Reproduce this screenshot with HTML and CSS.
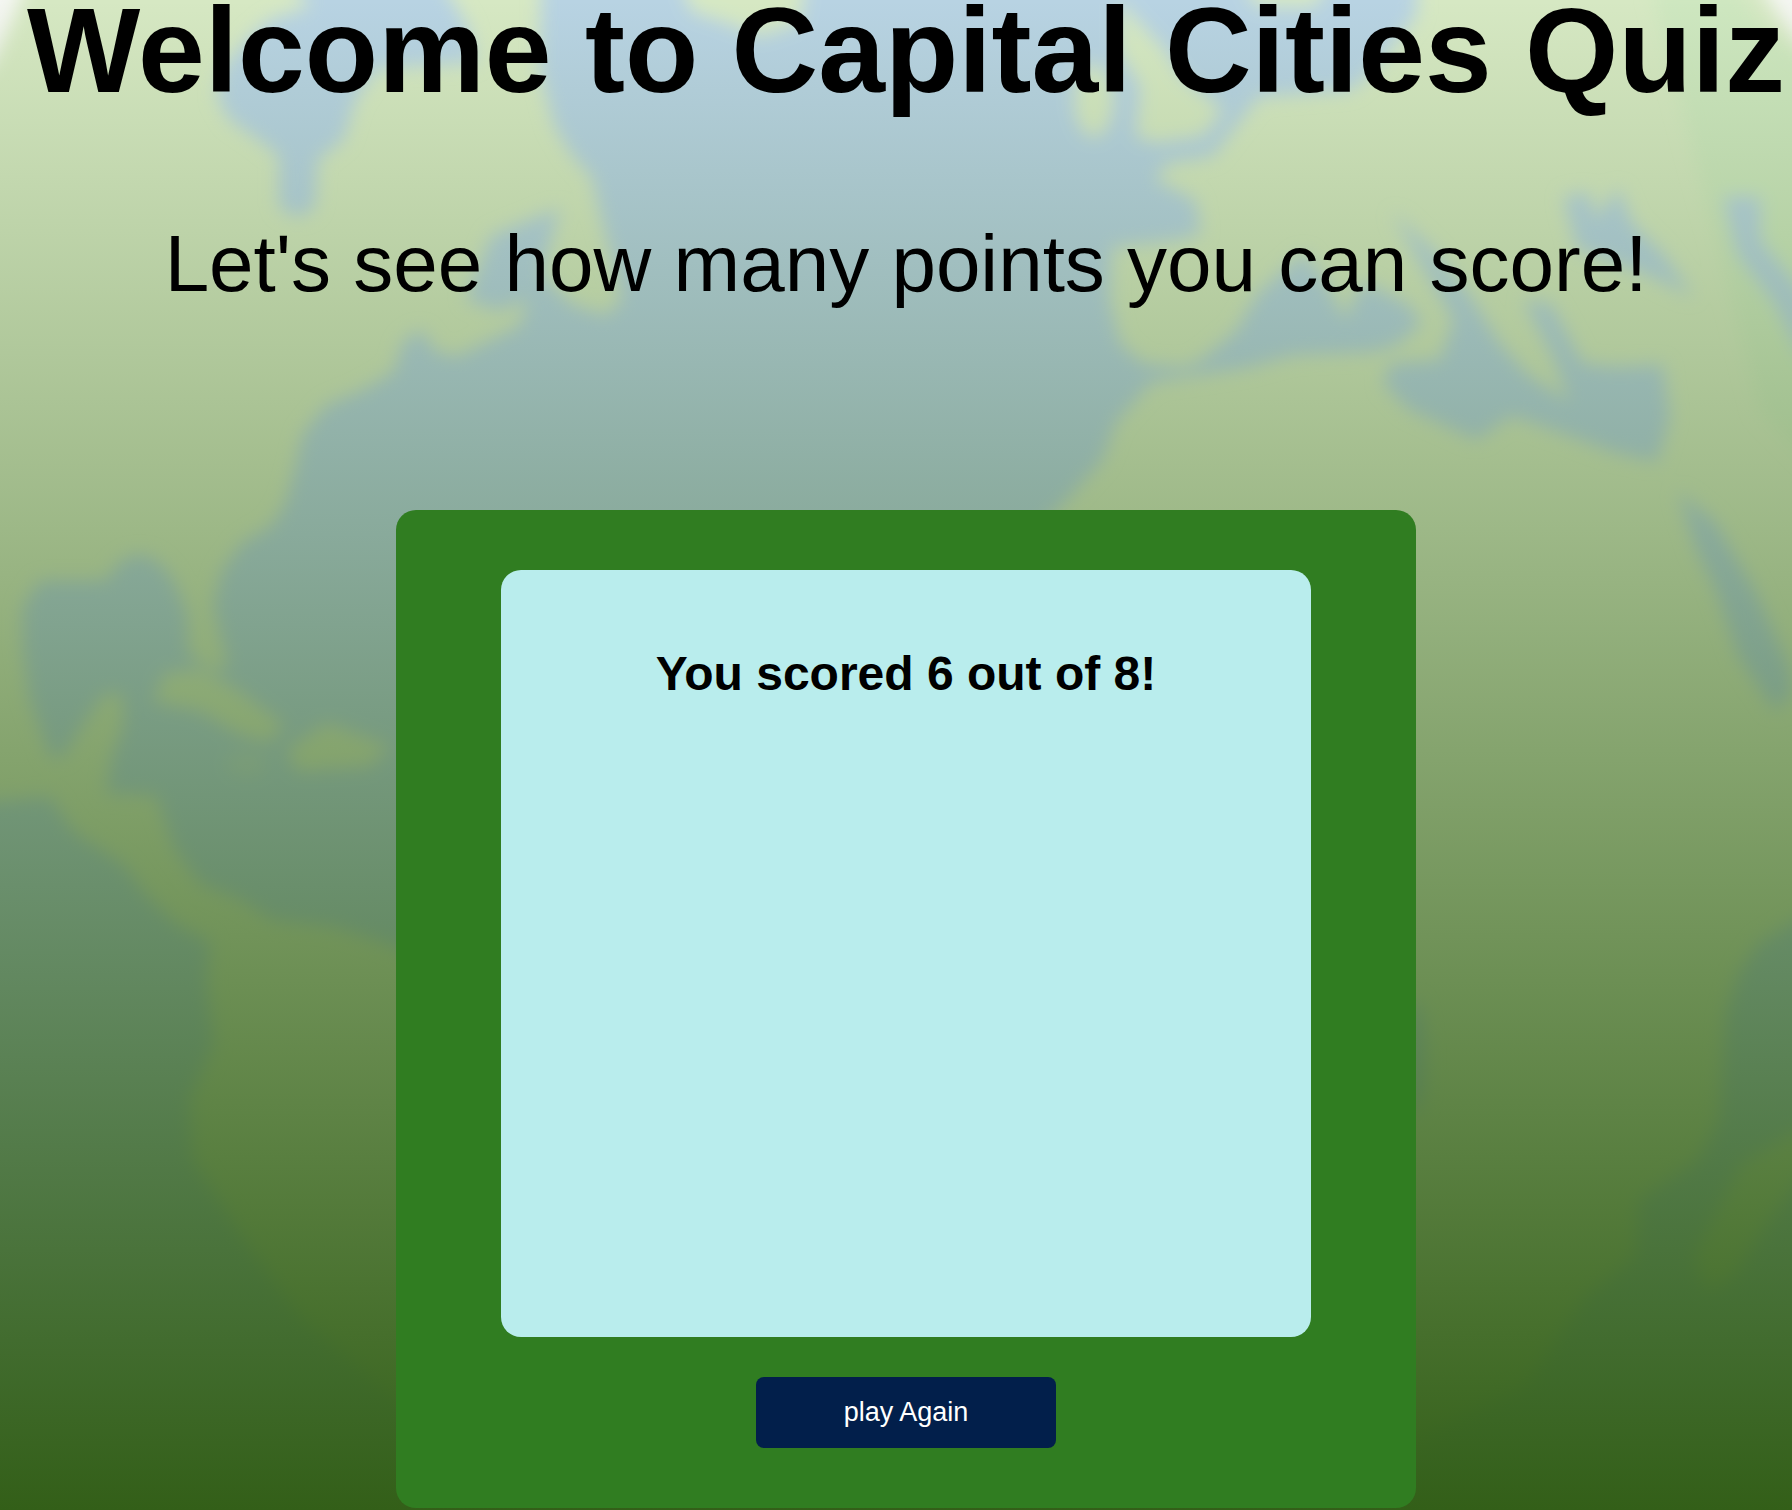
FILE: index.html
```html
<!DOCTYPE html>
<html lang="en">
<head>
  <meta charset="utf-8">
  <meta name="viewport" content="width=device-width, initial-scale=1">
  <title>Capital Cities Quiz</title>
  <link rel="stylesheet" href="styles.css">
</head>
<body>
  <svg class="backdrop" viewBox="0 0 1568 1321" preserveAspectRatio="xMidYMin slice" aria-hidden="true">
    <defs>
      <filter id="soften" x="-2%" y="-2%" width="104%" height="104%">
        <feGaussianBlur stdDeviation="8"/>
      </filter>
      <linearGradient id="shade" x1="0" y1="0" x2="0" y2="1">
        <stop class="shade-top" offset="0"/>
        <stop class="shade-bottom" offset="1"/>
      </linearGradient>
    </defs>
    <rect class="land" width="1568" height="1321"/>
    <g filter="url(#soften)">
      <path class="space" d="M-30 -30H28Q12 20 -10 62H-30ZM1532 -30H1600V60Q1560 30 1532 -30Z"/>
      <path class="far-land" d="M1445 -10Q1475 110 1500 200L1540 360L1600 420V60Q1545 40 1520 -10Z"/>
      <!-- Hudson Bay -->
      <path class="sea" d="M250 -20L272 5L235 18L216 35L195 60L190 85L201 105L226 122L244 136L244 180Q261 198 276 180L278 140L301 122L311 88L330 60L417 55L410 24L384 -20Z"/>
      <!-- Atlantic, Gulf of Mexico and Caribbean -->
      <path class="sea" d="M474 -20L472 60L485 110L500 135L518 155L526 190L534 220L544 262L530 276L500 266L474 240L490 182L430 206L408 262L436 272L462 262L455 285L430 297L400 312L382 308L368 288L352 300L345 325L320 340L285 355L265 380L258 410L250 440L238 460L212 475L194 500L187 530L193 555L200 582L187 588L165 572L164 537L153 510Q128 470 102 495L93 508L35 508L20 531V566L26 612L44 662H55L75 630L92 606L108 608V636L98 662L93 694L137 696L152 741L175 773L210 787L239 805L292 811L346 828L600 1000H900V470L931 440L965 402L976 370L1006 336L1040 322L1000 318L980 300L971 262L973 216L1031 210L1051 204L1046 175L1011 157L1021 143L1061 137L1081 111L1101 85L1182 79L1205 58L1240 12V-20Z"/>
      <!-- Pacific and southern ocean -->
      <path class="sea" d="M-20 702L44 697L65 728L109 757L129 784L155 809L184 824L181 857L187 913L166 962L169 1015L210 1079L262 1152L346 1225L500 1350H-20Z"/>
      <path class="sea" d="M1590 795L1539 825L1521 852L1510 887L1504 980L1486 1015L1434 1050L1431 1100L1387 1135L1335 1213L1240 1260L1200 1350H1600Z"/>
      <!-- Mediterranean -->
      <path class="sea" d="M1010 334L1051 315L1081 290L1101 256L1141 221L1162 250L1177 280L1192 246L1232 266L1244 283L1222 302L1202 308L1131 311L1091 322L1050 328Z"/>
      <path class="sea" d="M1218 185L1255 220L1286 258L1312 300L1337 328L1373 352L1360 315L1333 262L1357 266L1385 318L1413 321L1455 319L1461 365L1450 404L1413 396L1347 372L1322 364L1292 385L1232 358L1210 335L1217 318L1260 315L1272 280L1240 225Z"/>
      <!-- Black Sea, Caspian Sea and Red Sea -->
      <path class="sea" d="M1368 172L1390 168L1396 192L1416 164L1428 195L1455 222L1482 260L1440 240L1380 218Z"/>
      <path class="sea" d="M1508 172H1540V210L1580 260V320L1553 266L1520 222Z"/>
      <path class="sea" d="M1468 430L1500 456L1536 518L1565 583L1568 607L1553 622L1521 574L1501 515L1484 480Z"/>
      <ellipse class="sea" cx="1237" cy="925" rx="10" ry="50"/>
      <!-- Islands -->
      <path class="land" d="M978 0L1018 42L1034 67L1070 96L1053 119L1011 125L994 119L998 76L978 44Z"/>
      <ellipse class="land" cx="957" cy="88" rx="17" ry="32"/>
      <path class="land" d="M594 -20L605 10L635 20L665 32L700 20L706 -20Z"/>
      <path class="land" d="M1085 -20L1100 6H1150L1165 -20Z"/>
      <path class="land" d="M134 614L144 589L175 585L206 602L249 634L235 650L208 642L175 622Z"/>
      <path class="land" d="M251 656L286 632L342 653L323 671L260 675Z"/>
      <ellipse class="islet" cx="216" cy="668" rx="18" ry="11"/>
      <path class="land" d="M1580 985L1524 1018L1502 1060L1482 1100L1493 1130L1517 1117L1545 1072L1580 1025Z"/>
    </g>
    <rect width="1568" height="1321" fill="url(#shade)"/>
  </svg>

  <header class="intro">
    <h1 class="title">Welcome to Capital Cities Quiz</h1>
    <p class="tagline">Let's see how many points you can score!</p>
  </header>

  <main class="quiz">
    <section class="panel">
      <h2 class="score">You scored 6 out of 8!</h2>
    </section>
    <button class="play-again" type="button">play Again</button>
  </main>
</body>
</html>
```
FILE: styles.css
```css
* {
  box-sizing: border-box;
}

body {
  position: relative;
  display: flex;
  flex-direction: column;
  align-items: center;
  gap: 200px;
  min-height: 100vh;
  margin: 0;
  padding: 0 0 2px 20px;
  background: #335f18;
  color: #000;
  font-family: "Liberation Sans", Arial, sans-serif;
}

.backdrop {
  position: absolute;
  inset: 0;
  z-index: -1;
  width: 100%;
  height: 100%;
}

.land {
  fill: #d6e8c3;
}

.far-land {
  fill: #cee7c0;
}

.sea {
  fill: #b8d3e3;
}

.islet {
  fill: #c2dad8;
}

.space {
  fill: #f4f6f2;
}

.shade-top {
  stop-color: #335f18;
  stop-opacity: 0;
}

.shade-bottom {
  stop-color: #335f18;
}

.intro {
  display: flex;
  flex-direction: column;
  gap: 118px;
  text-align: center;
}

.title {
  margin: 0;
  font-size: 120px;
  line-height: 100px;
}

.tagline {
  margin: 0;
  font-size: 80px;
  line-height: 92px;
}

.quiz {
  display: flex;
  flex-direction: column;
  align-items: center;
  gap: 40px;
  width: 100%;
  max-width: 1020px;
  padding: 60px 105px;
  border-radius: 20px;
  background: #307d21;
}

.panel {
  width: 100%;
  min-height: 767px;
  padding: 76px 40px;
  border-radius: 20px;
  background: #b9eded;
  text-align: center;
}

.score {
  margin: 0;
  font-size: 48px;
  line-height: 56px;
}

.play-again {
  width: 300px;
  padding: 20px;
  border: 0;
  border-radius: 8px;
  background: #021f4b;
  color: #fff;
  font-family: inherit;
  font-size: 27px;
  line-height: 31px;
}
```
